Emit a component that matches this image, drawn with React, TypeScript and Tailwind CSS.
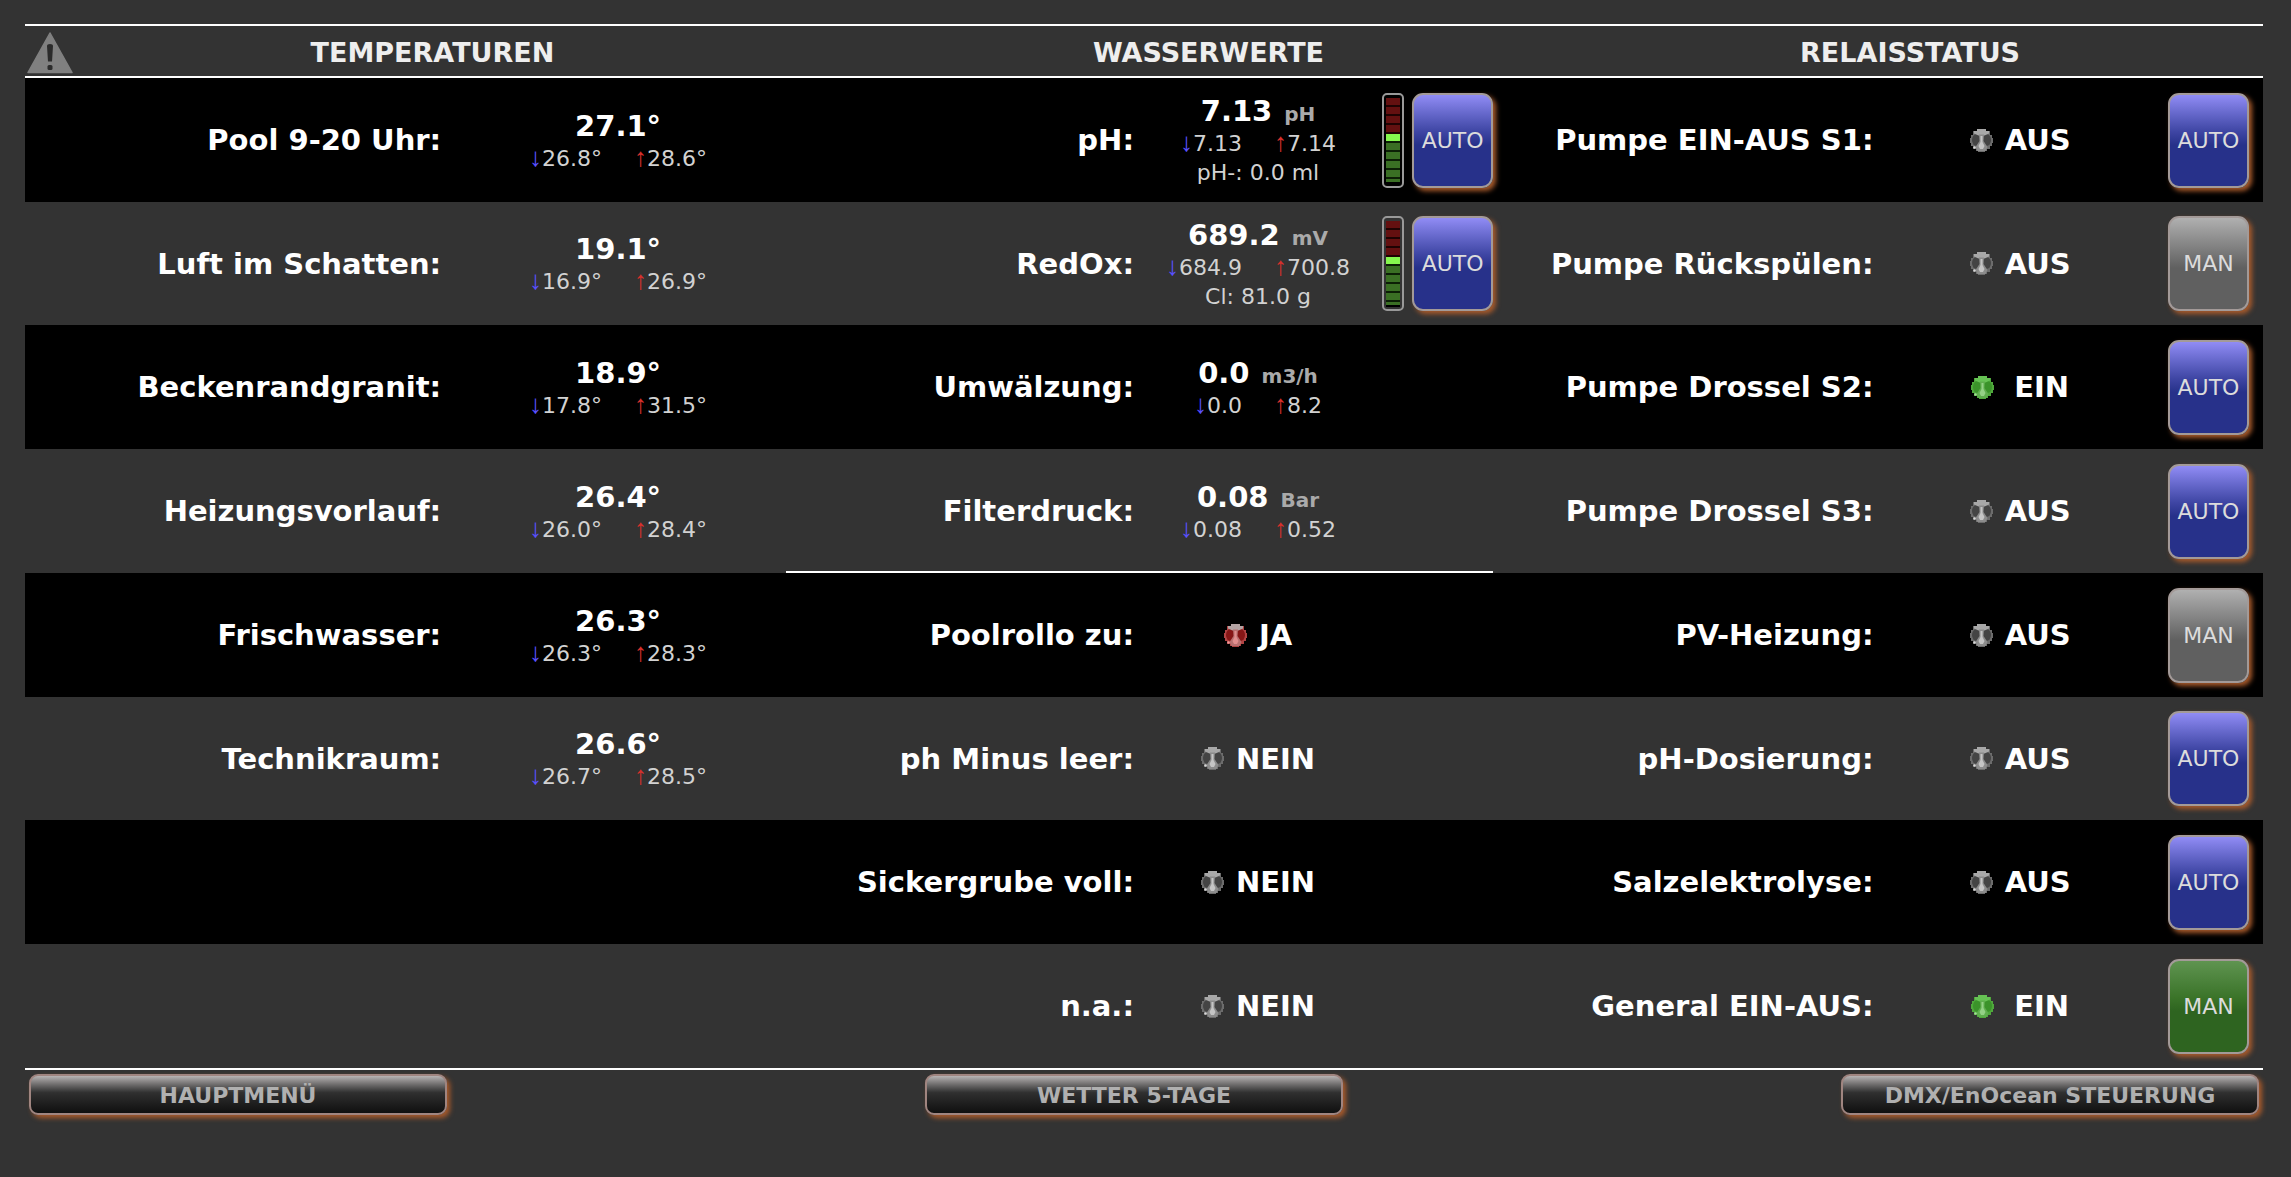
import clsx from "clsx";

type Tone = "off" | "green" | "red";

interface Reading {
  label: string;
  value: string;
  unit?: string;
  min: string;
  max: string;
  note?: string;
  gauge?: boolean;
}

interface Signal {
  label: string;
  state: string;
  tone: Tone;
}

interface Relay extends Signal {
  mode: "AUTO" | "MAN";
  color: "blue" | "gray" | "green";
}

const temperatures: Reading[] = [
  { label: "Pool 9-20 Uhr", value: "27.1°", min: "26.8°", max: "28.6°" },
  { label: "Luft im Schatten", value: "19.1°", min: "16.9°", max: "26.9°" },
  { label: "Beckenrandgranit", value: "18.9°", min: "17.8°", max: "31.5°" },
  { label: "Heizungsvorlauf", value: "26.4°", min: "26.0°", max: "28.4°" },
  { label: "Frischwasser", value: "26.3°", min: "26.3°", max: "28.3°" },
  { label: "Technikraum", value: "26.6°", min: "26.7°", max: "28.5°" },
];

const waterReadings: Reading[] = [
  {
    label: "pH",
    value: "7.13",
    unit: "pH",
    min: "7.13",
    max: "7.14",
    note: "pH-: 0.0 ml",
    gauge: true,
  },
  {
    label: "RedOx",
    value: "689.2",
    unit: "mV",
    min: "684.9",
    max: "700.8",
    note: "Cl: 81.0 g",
    gauge: true,
  },
  { label: "Umwälzung", value: "0.0", unit: "m3/h", min: "0.0", max: "8.2" },
  { label: "Filterdruck", value: "0.08", unit: "Bar", min: "0.08", max: "0.52" },
];

const waterSignals: Signal[] = [
  { label: "Poolrollo zu", state: "JA", tone: "red" },
  { label: "ph Minus leer", state: "NEIN", tone: "off" },
  { label: "Sickergrube voll", state: "NEIN", tone: "off" },
  { label: "n.a.", state: "NEIN", tone: "off" },
];

const relays: Relay[] = [
  { label: "Pumpe EIN-AUS S1", state: "AUS", tone: "off", mode: "AUTO", color: "blue" },
  { label: "Pumpe Rückspülen", state: "AUS", tone: "off", mode: "MAN", color: "gray" },
  { label: "Pumpe Drossel S2", state: "EIN", tone: "green", mode: "AUTO", color: "blue" },
  { label: "Pumpe Drossel S3", state: "AUS", tone: "off", mode: "AUTO", color: "blue" },
  { label: "PV-Heizung", state: "AUS", tone: "off", mode: "MAN", color: "gray" },
  { label: "pH-Dosierung", state: "AUS", tone: "off", mode: "AUTO", color: "blue" },
  { label: "Salzelektrolyse", state: "AUS", tone: "off", mode: "AUTO", color: "blue" },
  { label: "General EIN-AUS", state: "EIN", tone: "green", mode: "MAN", color: "green" },
];

const ledColors = {
  off: { body: "#444", rim: "#6c6c6c", cap: "#a8a8a8", stem: "#8c8c8c", shine: "#d8d8d8" },
  green: { body: "#3b932a", rim: "#4fa83c", cap: "#66c254", stem: "#5fae4e", shine: "#a6dc9a" },
  red: { body: "#861616", rim: "#b04444", cap: "#b4a4a4", stem: "#b87070", shine: "#f09a9a" },
};

const Led = ({ tone }: { tone: Tone }) => {
  const c = ledColors[tone];
  return (
    <svg viewBox="0 0 23 23" className="h-[23px] w-[23px] shrink-0" aria-hidden="true">
      <path
        d="M7 0h9v2h4v4h2v3h1v5h-1v3h-2v3h-3v2h-2v1H8v-1H6v-2H3v-3H1v-3H0V9h1V6h2V2h4z"
        fill={c.rim}
      />
      <ellipse cx="6.500" cy="11" rx="4.500" ry="6" fill={c.body} />
      <ellipse cx="16.500" cy="11" rx="4.500" ry="6" fill={c.body} />
      <path d="M7 0h9v2h3v2.500l-4.500 2h-6L4 4.500V2h3z" fill={c.cap} />
      <path d="M9 5.500h5l-.5 6.500 4 6-2 4h-8l-2-4 4-6z" fill={c.stem} />
      <path d="M10.500 7h2v6l2 4-1.500 3h-3l-1.500-3 2-4z" fill={c.shine} opacity="0.75" />
      <circle cx="4.500" cy="18.500" r="1.200" fill={c.shine} />
    </svg>
  );
};

const WarningIcon = () => (
  <svg viewBox="0 0 46 42" className="h-[42px] w-[46px]" aria-hidden="true">
    <path
      d="M23 1 45 40.500H1z"
      fill="#808080"
      stroke="#808080"
      strokeWidth="1.500"
      strokeLinejoin="round"
    />
    <path d="M20 14q0-2 3-2t3 2l-1 15.500h-4z" fill="#2b2b2b" />
    <rect x="20.500" y="33" width="5" height="5" rx="1.500" fill="#2b2b2b" />
  </svg>
);

const Gauge = () => (
  <div className="flex h-[95px] w-[22px] flex-col overflow-hidden rounded-[5px] border-2 border-[#999] px-[2px] py-[3px]">
    {Array.from({ length: 10 }, (_, i) => (
      <div
        key={i}
        className={clsx(
          "h-[9px] shrink-0 border-b-2",
          i < 4 && "border-[#1f0303] bg-[#641010]",
          i === 4 && "border-[#0c1f06] bg-[#86f84e]",
          i > 4 && i < 9 && "border-[#0c1f06] bg-[#3a6f24]",
          i === 9 && "max-h-[5px] border-b-0 bg-[#3a6f24]",
        )}
      />
    ))}
  </div>
);

const ModeButton = ({ mode, color, name }: { mode: string; color: Relay["color"]; name: string }) => (
  <button
    type="button"
    aria-label={`${name} ${mode}`}
    className={clsx(
      "h-[95px] w-[81px] rounded-[11px] border-2 border-[#a39a98] bg-linear-to-b text-[22px] leading-[29px] text-[#dcdcdc] shadow-[3px_3px_5px_#a85a2b]",
      color === "blue" && "from-[#918cf5] via-[#3f46a4] via-40% to-[#27318a] to-55%",
      color === "gray" && "from-[#b0b0b0] via-[#767676] via-40% to-[#606060] to-55%",
      color === "green" && "from-[#5f9450] via-[#3b7429] via-40% to-[#2e6420] to-55%",
    )}
  >
    {mode}
  </button>
);

const Label = ({ text }: { text?: string }) => (
  <th
    scope="row"
    className="pr-[9px] text-right text-[29px] leading-[36px] font-bold text-white"
  >
    {text && `${text}:`}
  </th>
);

const Arrow = ({ up }: { up?: boolean }) => (
  <span
    className={clsx(
      "font-['Liberation_Sans',sans-serif] text-[26px] leading-none",
      up ? "text-[#d8302c]" : "text-[#5a50ff]",
    )}
  >
    {up ? "↑" : "↓"}
  </span>
);

const Values = ({ reading }: { reading: Reading }) => (
  <div className="text-center text-[22px] leading-[29px] text-[#d2d2d2]">
    <div className="flex items-baseline justify-center gap-[12px] text-[29px] leading-[36px] font-bold text-white">
      {reading.value}
      {reading.unit && (
        <span className="text-[20px] leading-[29px] text-[#aaa]">{reading.unit}</span>
      )}
    </div>
    <div className="flex h-[29px] justify-center gap-8">
      <span>
        <Arrow />
        {reading.min}
      </span>
      <span>
        <Arrow up />
        {reading.max}
      </span>
    </div>
    {reading.note && <div>{reading.note}</div>}
  </div>
);

const Status = ({ signal }: { signal: Signal }) => (
  <div
    className={clsx(
      "flex items-center justify-center text-[29px] leading-[36px] font-bold text-white",
      signal.state === "EIN" ? "gap-5" : "gap-3",
    )}
  >
    <Led tone={signal.tone} />
    {signal.state}
  </div>
);

const NavButton = ({ children, className }: { children: string; className?: string }) => (
  <button
    type="button"
    className={clsx(
      "h-[41px] w-[418px] rounded-[9px] border-2 border-[#a08580] bg-linear-to-b from-[#b8b4b4] via-[#303030] via-45% to-[#101010] pt-[2px] text-[22px] leading-[29px] font-bold text-[#b0b0b0] shadow-[3px_3px_5px_#a85a2b]",
      className,
    )}
  >
    {children}
  </button>
);

export default function App() {
  return (
    <main className="min-h-screen bg-[#333] pt-6 pr-[28px] pl-[25px] font-['DejaVu_Sans',Verdana,sans-serif]">
      <table className="w-full table-fixed border-collapse">
        <colgroup>
          <col className="w-[19%]" />
          <col className="w-[15%]" />
          <col className="w-[16%]" />
          <col className="w-[10.2%]" />
          <col className="w-[5.4%]" />
          <col className="w-[17.4%]" />
          <col className="w-[12.3%]" />
          <col />
        </colgroup>
        <thead className="text-[27px] leading-[36px] font-bold text-[#eee]">
          <tr className="h-[54px] shadow-[inset_0_2px_#fff,inset_0_-2px_#fff]">
            <th colSpan={2} scope="colgroup" className="pt-1">
              <div className="flex items-center">
                <span className="w-[54px] shrink-0 pl-[2px]">
                  <WarningIcon />
                </span>
                <span className="flex-1">TEMPERATUREN</span>
              </div>
            </th>
            <th colSpan={3} scope="colgroup" className="pt-1 pl-[138px]">
              WASSERWERTE
            </th>
            <th colSpan={3} scope="colgroup" className="pt-1 pl-16">
              RELAISSTATUS
            </th>
          </tr>
        </thead>
        <tbody>
          {relays.map((relay, i) => {
            const temperature = temperatures[i];
            const water = waterReadings[i];
            const signal = waterSignals[i - waterReadings.length];
            const line = i === 3 && "shadow-[inset_0_-2px_#fff]";
            return (
              <tr
                key={relay.label}
                className={clsx(
                  i % 4 === 1 ? "h-[123px]" : "h-[124px]",
                  i % 2 === 0 && "bg-black",
                )}
              >
                <Label text={temperature?.label} />
                <td>{temperature && <Values reading={temperature} />}</td>
                <td colSpan={3} className={clsx("p-0", line)}>
                  <div className="grid grid-cols-[358fr_228fr_121fr] items-center">
                    <div className="pr-[10px] text-right text-[29px] leading-[36px] font-bold text-white">
                      {(water ?? signal).label}:
                    </div>
                    {water ? <Values reading={water} /> : <Status signal={signal} />}
                    {water?.gauge && (
                      <div className="flex justify-end gap-2">
                        <Gauge />
                        <ModeButton mode="AUTO" color="blue" name={water.label} />
                      </div>
                    )}
                  </div>
                </td>
                <Label text={relay.label} />
                <td>
                  <Status signal={relay} />
                </td>
                <td className="pr-[14px]">
                  <div className="flex justify-end">
                    <ModeButton mode={relay.mode} color={relay.color} name={relay.label} />
                  </div>
                </td>
              </tr>
            );
          })}
        </tbody>
      </table>
      <nav className="flex justify-between border-t-2 border-white px-1 pt-1">
        <NavButton>HAUPTMENÜ</NavButton>
        <NavButton className="mr-5">WETTER 5-TAGE</NavButton>
        <NavButton>DMX/EnOcean STEUERUNG</NavButton>
      </nav>
    </main>
  );
}
